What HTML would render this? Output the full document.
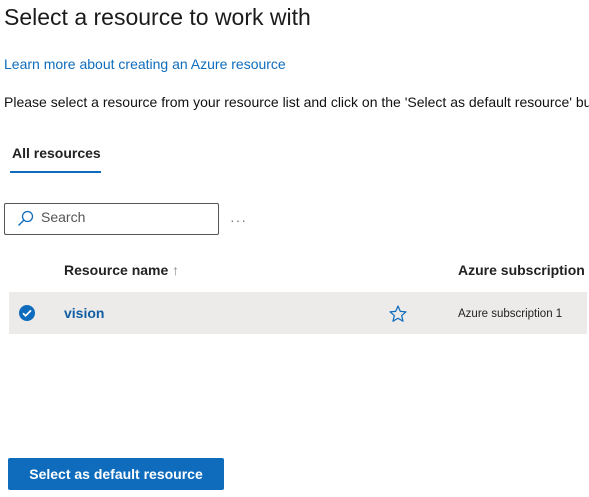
<!DOCTYPE html>
<html><head><style>
body{margin:0;width:589px;height:497px;overflow:hidden;background:#fff;font-family:"Liberation Sans",sans-serif;color:#000;position:relative}
.a{position:absolute;white-space:nowrap}
</style></head><body>
<div class="a" style="left:4px;top:4px;font-size:23px;color:#1b1b1b">Select a resource to work with</div>
<div class="a" style="left:4px;top:56px;font-size:14px;color:#0f6cbd">Learn more about creating an Azure resource</div>
<div class="a" style="left:4px;top:94px;font-size:14px;color:#111">Please select a resource from your resource list and click on the 'Select as default resource' bu</div>
<div class="a" style="left:12px;top:145px;font-size:14px;font-weight:bold;color:#222">All resources</div>
<div class="a" style="left:10px;top:171px;width:91px;height:2px;background:#0f6cbd"></div>
<div class="a" style="left:4px;top:203px;width:213px;height:30px;border:1px solid #555;border-radius:2px"></div>
<svg class="a" style="left:16px;top:209px" width="20" height="20" viewBox="0 0 20 20"><circle cx="11.5" cy="7.5" r="5" fill="none" stroke="#0f6cbd" stroke-width="1.3"/><line x1="8" y1="11" x2="2.5" y2="16.5" stroke="#0f6cbd" stroke-width="1.4"/></svg>
<div class="a" style="left:41px;top:209px;font-size:14px;color:#555">Search</div>
<div class="a" style="left:230px;top:212px;font-size:14px;color:#777;letter-spacing:1px">···</div>
<div class="a" style="left:64px;top:262px;font-size:14px;font-weight:bold;color:#222">Resource name <span style="font-weight:normal;color:#888">↑</span></div>
<div class="a" style="left:458px;top:262px;font-size:14px;font-weight:bold;color:#222">Azure subscription</div>
<div class="a" style="left:9px;top:292px;width:578px;height:42px;background:#edebe9"></div>
<svg class="a" style="left:18px;top:304px" width="18" height="18" viewBox="0 0 18 18"><circle cx="9" cy="9" r="8" fill="#0f6cbd"/><path d="M5 9.3l2.6 2.5L13 6.4" fill="none" stroke="#fff" stroke-width="1.7"/></svg>
<div class="a" style="left:64px;top:305px;font-size:14px;font-weight:bold;color:#115ea3">vision</div>
<svg class="a" style="left:388px;top:304px" width="20" height="20" viewBox="0 0 24 24"><path d="M12 2.5l2.8 6.3 6.8.6-5.2 4.5 1.6 6.7L12 17.1l-6 3.5 1.6-6.7-5.2-4.5 6.8-.6z" fill="none" stroke="#0f6cbd" stroke-width="1.5" stroke-linejoin="round"/></svg>
<div class="a" style="left:458px;top:307px;font-size:11.5px;color:#222;line-height:14px">Azure subscription 1</div>
<div class="a" style="left:8px;top:458px;width:216px;height:32px;background:#0f6cbd;border-radius:2px;color:#fff;font-size:14px;font-weight:bold;text-align:center;line-height:32px">Select as default resource</div>
</body></html>
